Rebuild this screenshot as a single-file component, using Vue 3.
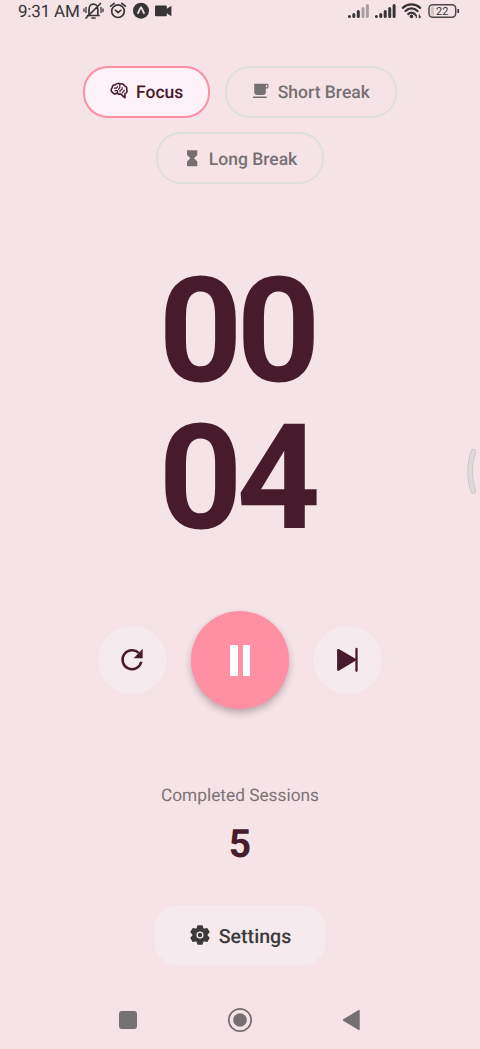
<script setup>
import { ref } from 'vue'

const modes = [
  { id: 'focus', label: 'Focus' },
  { id: 'short', label: 'Short Break' },
  { id: 'long', label: 'Long Break' },
]
const active = ref('focus')
const minutes = ref('00')
const seconds = ref('04')
const sessions = ref(5)
</script>

<template>
  <div class="screen">
    <header class="status">
      <span class="clock">9:31 AM</span>
      <!-- muted bell, alarm, app badge, camera -->
      <svg class="status-left" viewBox="82 0 92 22" width="92" height="22">
        <g fill="none" stroke="#383536" stroke-width="1.7" stroke-linecap="round">
          <path d="M87.5 15.5h11.5M89 14.5V9.5c0-3.2 2-5.3 4.4-5.3s4.4 2.1 4.4 5.3v5M92 18h3M86 18 100.5 3.5" />
          <path d="M86 7.5v5M84 9v2.5M101 7.5v5M103 9v2.5" stroke-width="1.3" />
          <circle cx="118" cy="11.2" r="6.3" />
          <path d="M115.4 10.2 118 12.6l2.8-2.2M110.7 6.2l3.4-2.8M125.3 6.2l-3.4-2.8" />
        </g>
        <circle cx="141" cy="10.7" r="8" fill="#383536" />
        <path d="M137.5 13.7c1.3-1.5 2-4.8 3.5-6.3 1.5 1.5 2.2 4.8 3.5 6.3" fill="none" stroke="#f5e3e7" stroke-width="1.8" />
        <path d="M156 5.5h9.8q1 0 1 1v2.3l4.6-3v10.4l-4.6-3v2q0 1-1 1H156q-1 0-1-1V6.5q0-1 1-1z" fill="#383536" />
      </svg>
      <svg class="status-right" viewBox="346 0 114 22" width="114" height="22">
        <g stroke="#383536" stroke-width="3" stroke-linecap="round">
          <path d="M349.4 16.4v.01M353.8 16.4v-2M358.3 16.4v-5" />
          <path d="M363 16.4v-8M367.4 16.4v-11" stroke="#aaa0a3" />
          <path d="M376.4 16.4v.01M380.8 16.4v-2M385.2 16.4v-5M389.7 16.4v-8M394.1 16.4v-11" />
        </g>
        <path d="M402.8 7.8c5-4.6 12.4-4.6 17.4 0M405.5 11c3.6-3.3 8.4-3.3 12 0M408.3 14c2-1.7 4.4-1.7 6.4 0" fill="none" stroke="#383536" stroke-width="2.3" stroke-linecap="round" />
        <circle cx="411.5" cy="16.4" r="1.8" fill="#383536" />
        <path d="M416.3 18v-3M415 15.8l1.3-1.5M419.3 14.5v3.3M420.6 16.5l-1.3 1.5" stroke="#383536" stroke-width="1.2" fill="none" />
        <rect x="429" y="4.7" width="26.7" height="12.6" rx="3.7" fill="none" stroke="#4b4748" stroke-width="1.5" />
        <path d="M434 6.5v9h-1.5q-1.7 0-1.7-1.7V8.2q0-1.7 1.7-1.7z" fill="#d0c5c8" />
        <path d="M458.2 9v4" stroke="#4b4748" stroke-width="1.8" />
        <text x="442.3" y="15" text-anchor="middle" class="charge">22</text>
      </svg>
    </header>

    <nav class="modes">
      <button
        v-for="mode in modes"
        :key="mode.id"
        :class="['mode', mode.id, { active: active === mode.id }]"
        @click="active = mode.id"
      >
        <svg v-if="mode.id === 'focus'" viewBox="0 0 18 18" width="18" height="18">
          <g fill="none" stroke="currentColor" stroke-width="1.6" stroke-linecap="round" stroke-linejoin="round">
            <path d="M2.6 10.5C.8 9.5.8 6.8 2.2 5.8 2 3.7 4 2.500 5.400 2.800 6.500 1.200 9 1 10.100 2c1.800-.7 3.700.2 4.200 1.700 2 .4 2.900 2.300 2.300 3.900 1 1.800 0 3.900-1.700 4.200v4l-4-3.700H8.700L7.300 11c-1.700 1-3.800.8-4.700-.5z" />
            <path d="M4.400 6.200h2l1.200-1.500M5 8.700h2.500v1.800M9.800 2.600v3.100L8.500 7.300M10 9.800V8.500l2-1 .2-2M14.300 8.500l-2 2.300" stroke-width="1.200" />
          </g>
        </svg>
        <svg v-else-if="mode.id === 'short'" viewBox="0 0 18 18" width="18" height="18">
          <path fill="currentColor" fill-rule="evenodd" d="M2.200 1.700h13q1.300 0 1.300 1.300v1.900q0 1.700-1.700 1.700h-1v3.300q0 3-3 3H5.200q-3 0-3-3zM14 3v2.300h.7q.6 0 .6-.6V3zM1 14.600h13.700v1.300H1z" />
        </svg>
        <svg v-else viewBox="0 0 18 18" width="18" height="18">
          <path fill="currentColor" d="M4 1.200h10.300v4.700L11 9.200l3.300 3.300v4.700H4v-4.700l3.300-3.300L4 5.900z" />
        </svg>
        <span>{{ mode.label }}</span>
      </button>
    </nav>

    <main class="timer">
      <div>{{ minutes }}</div>
      <div>{{ seconds }}</div>
    </main>

    <section class="controls">
      <button class="round" aria-label="Reset">
        <svg viewBox="0 0 30 30" width="30" height="30">
          <path d="M24.300 16.800a9.500 9.500 0 1 1-2.600-8.900" fill="none" stroke="currentColor" stroke-width="2.500" />
          <path d="M25.700 3.800v9.500h-9z" fill="currentColor" />
        </svg>
      </button>
      <button class="play" aria-label="Pause">
        <span class="bar"></span><span class="bar"></span>
      </button>
      <button class="round" aria-label="Skip">
        <svg viewBox="0 0 30 30" width="30" height="30">
          <path d="M5.200 5 22 14.800 5.200 24.800z" fill="currentColor" stroke="currentColor" stroke-width="2.200" stroke-linejoin="round" />
          <path d="M23.500 3.900v21.900" stroke="currentColor" stroke-width="2.300" stroke-linecap="round" />
        </svg>
      </button>
    </section>

    <section class="sessions">
      <div class="caption">Completed Sessions</div>
      <div class="count">{{ sessions }}</div>
    </section>

    <button class="settings">
      <svg viewBox="0 0 22 22" width="22" height="22">
        <path fill="currentColor" stroke="currentColor" stroke-linejoin="round" stroke-width="1.400" d="M9 1.900h4l.7 2.600 1.600.9 2.600-.7 2 3.500-1.900 1.900v1.800l1.900 1.900-2 3.500-2.600-.7-1.600.9-.7 2.600H9l-.7-2.600-1.600-.9-2.600.7-2-3.500L4 11.900v-1.800L2.100 8.200l2-3.500 2.600.7 1.600-.9z" />
        <circle cx="11" cy="11" r="2.900" fill="none" stroke="#f5eaed" stroke-width="1.300" />
      </svg>
      <span>Settings</span>
    </button>

    <footer class="system-nav">
      <svg viewBox="0 0 26 26" width="26" height="26"><rect x="4" y="4" width="18" height="18" rx="3" fill="#757072" /></svg>
      <svg viewBox="0 0 26 26" width="26" height="26">
        <circle cx="13" cy="13" r="11.200" fill="none" stroke="#757072" stroke-width="1.700" />
        <circle cx="13" cy="13" r="6.800" fill="#757072" />
      </svg>
      <svg viewBox="0 0 26 26" width="26" height="26"><path d="M4.600 13 20 3.700v18.600z" fill="#757072" stroke="#757072" stroke-width="1.500" stroke-linejoin="round" /></svg>
    </footer>

    <svg class="edge-handle" viewBox="0 0 12 50" width="12" height="50">
      <path d="M7.500 4.500Q.5 25 7.500 44" fill="none" stroke="#cdbfc3" stroke-width="5.500" stroke-linecap="round" />
      <path d="M7.500 4.500Q.5 25 7.500 44" fill="none" stroke="#dcd9da" stroke-width="4" stroke-linecap="round" />
    </svg>
  </div>
</template>

<style>
body {
  background: #f5e3e7;
}
</style>

<style scoped>
.screen {
  position: relative;
  display: flex;
  flex-direction: column;
  align-items: center;
  width: 480px;
  height: 1049px;
  overflow: hidden;
  background: #f5e3e7;
  color: #471b2b;
  font-family: Roboto, sans-serif;
  text-rendering: geometricPrecision;
}
button {
  padding: 0;
  border: 0;
  font-family: inherit;
  color: inherit;
  text-rendering: inherit;
}
svg {
  display: block;
  flex: none;
}
.status {
  display: flex;
  width: 480px;
  height: 22px;
  box-sizing: border-box;
  padding: 0 20px 0 18px;
}
.clock {
  width: 64px;
  color: #383536;
  font-size: 17px;
  line-height: 24px;
  letter-spacing: -0.2px;
  white-space: nowrap;
}
.status-right {
  margin-left: auto;
}
.charge {
  fill: #383536;
  font-size: 11px;
}
.modes {
  display: flex;
  flex-wrap: wrap;
  justify-content: center;
  gap: 14.6px;
  width: 400px;
  margin-top: 44px;
}
.mode {
  display: flex;
  align-items: center;
  justify-content: center;
  gap: 8px;
  box-sizing: border-box;
  height: 51.7px;
  border: 2px solid #e0dfdf;
  border-radius: 25px;
  background: transparent;
  color: #757173;
  font-size: 17.5px;
  font-weight: 500;
}
.mode svg {
  margin-top: -1px;
}
.mode span {
  padding-top: 3px;
}
.mode.active {
  border-color: #fb8fa3;
  background: #fdf2f7;
  color: #471b2b;
}
.focus {
  width: 127px;
}
.short {
  width: 172px;
}
.long {
  width: 168px;
}
.timer {
  margin-top: 74.2px;
  padding-right: 7px;
  font-size: 146.5px;
  font-weight: 700;
  line-height: 146.5px;
  letter-spacing: -6.1px;
  text-align: center;
}
.controls {
  display: flex;
  align-items: center;
  gap: 24.4px;
  margin-top: 60px;
}
.round {
  display: grid;
  place-items: center;
  width: 68.5px;
  height: 68.5px;
  border-radius: 50%;
  background: #f5eaed;
}
.play {
  display: flex;
  align-items: center;
  justify-content: center;
  gap: 5px;
  width: 98px;
  height: 98px;
  border-radius: 50%;
  background: #ff8fa3;
  box-shadow: 0 4px 7px rgba(60, 30, 40, 0.3);
}
.bar {
  width: 7.3px;
  height: 31px;
  border-radius: 1px;
  background: #fff;
}
.sessions {
  margin-top: 76.8px;
  text-align: center;
}
.caption {
  color: #7b7476;
  font-size: 17.3px;
  line-height: 21px;
}
.count {
  margin-top: 14px;
  font-size: 39px;
  font-weight: 700;
  line-height: 46px;
}
.settings {
  display: flex;
  align-items: center;
  justify-content: center;
  gap: 8px;
  width: 172px;
  height: 60px;
  margin-top: 38px;
  border-radius: 24px;
  background: #f5eaed;
  color: #3d3a3b;
  font-size: 19.6px;
  font-weight: 500;
}
.settings span {
  padding-top: 3px;
}
.system-nav {
  display: flex;
  gap: 86px;
  margin-top: 42px;
}
.edge-handle {
  position: absolute;
  top: 447px;
  right: 2px;
}
</style>
